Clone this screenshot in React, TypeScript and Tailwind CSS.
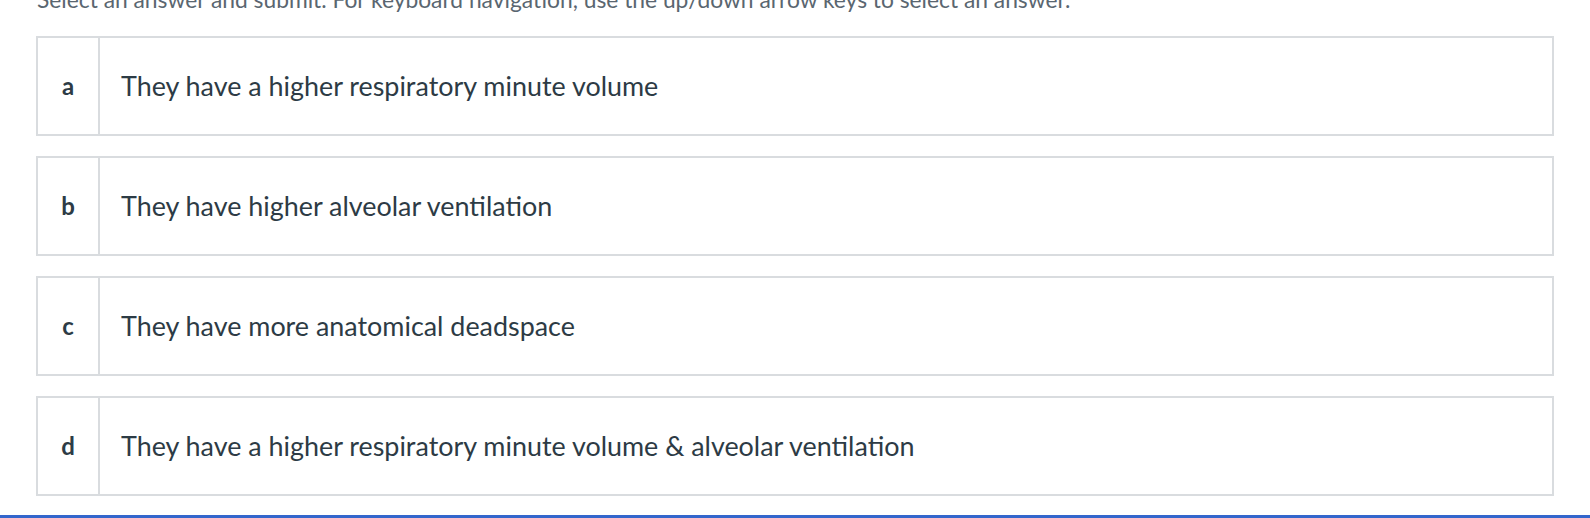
const options = [
  { key: 'a', text: 'They have a higher respiratory minute volume' },
  { key: 'b', text: 'They have higher alveolar ventilation' },
  { key: 'c', text: 'They have more anatomical deadspace' },
  { key: 'd', text: 'They have a higher respiratory minute volume & alveolar ventilation' },
];

export default function App() {
  return (
    <div
      className="flex h-[518px] w-full flex-col overflow-hidden bg-white text-[#2d3b45]"
      style={{ fontFamily: 'Lato, "Noto Sans", sans-serif' }}
    >
      <div className="-mt-[15px] h-[34px] whitespace-nowrap pl-[37px] text-[22.8px] leading-[28px] text-[#5a6670]">
        Select an answer and submit. For keyboard navigation, use the up/down arrow keys to select an answer.
      </div>
      <ul className="mx-[36px] flex flex-col gap-[20px] pt-[17px]">
        {options.map((o) => (
          <li key={o.key} className="flex h-[100px] border-2 border-[#d9dcdf]">
            <div className="flex w-[62px] shrink-0 items-center justify-center border-r-2 border-[#d9dcdf] text-[24px] font-bold">
              {o.key}
            </div>
            <div className="flex items-center pl-[21px] text-[26.9px]">{o.text}</div>
          </li>
        ))}
      </ul>
      <div className="mt-auto h-[3px] bg-[#3366cc]" />
    </div>
  );
}
